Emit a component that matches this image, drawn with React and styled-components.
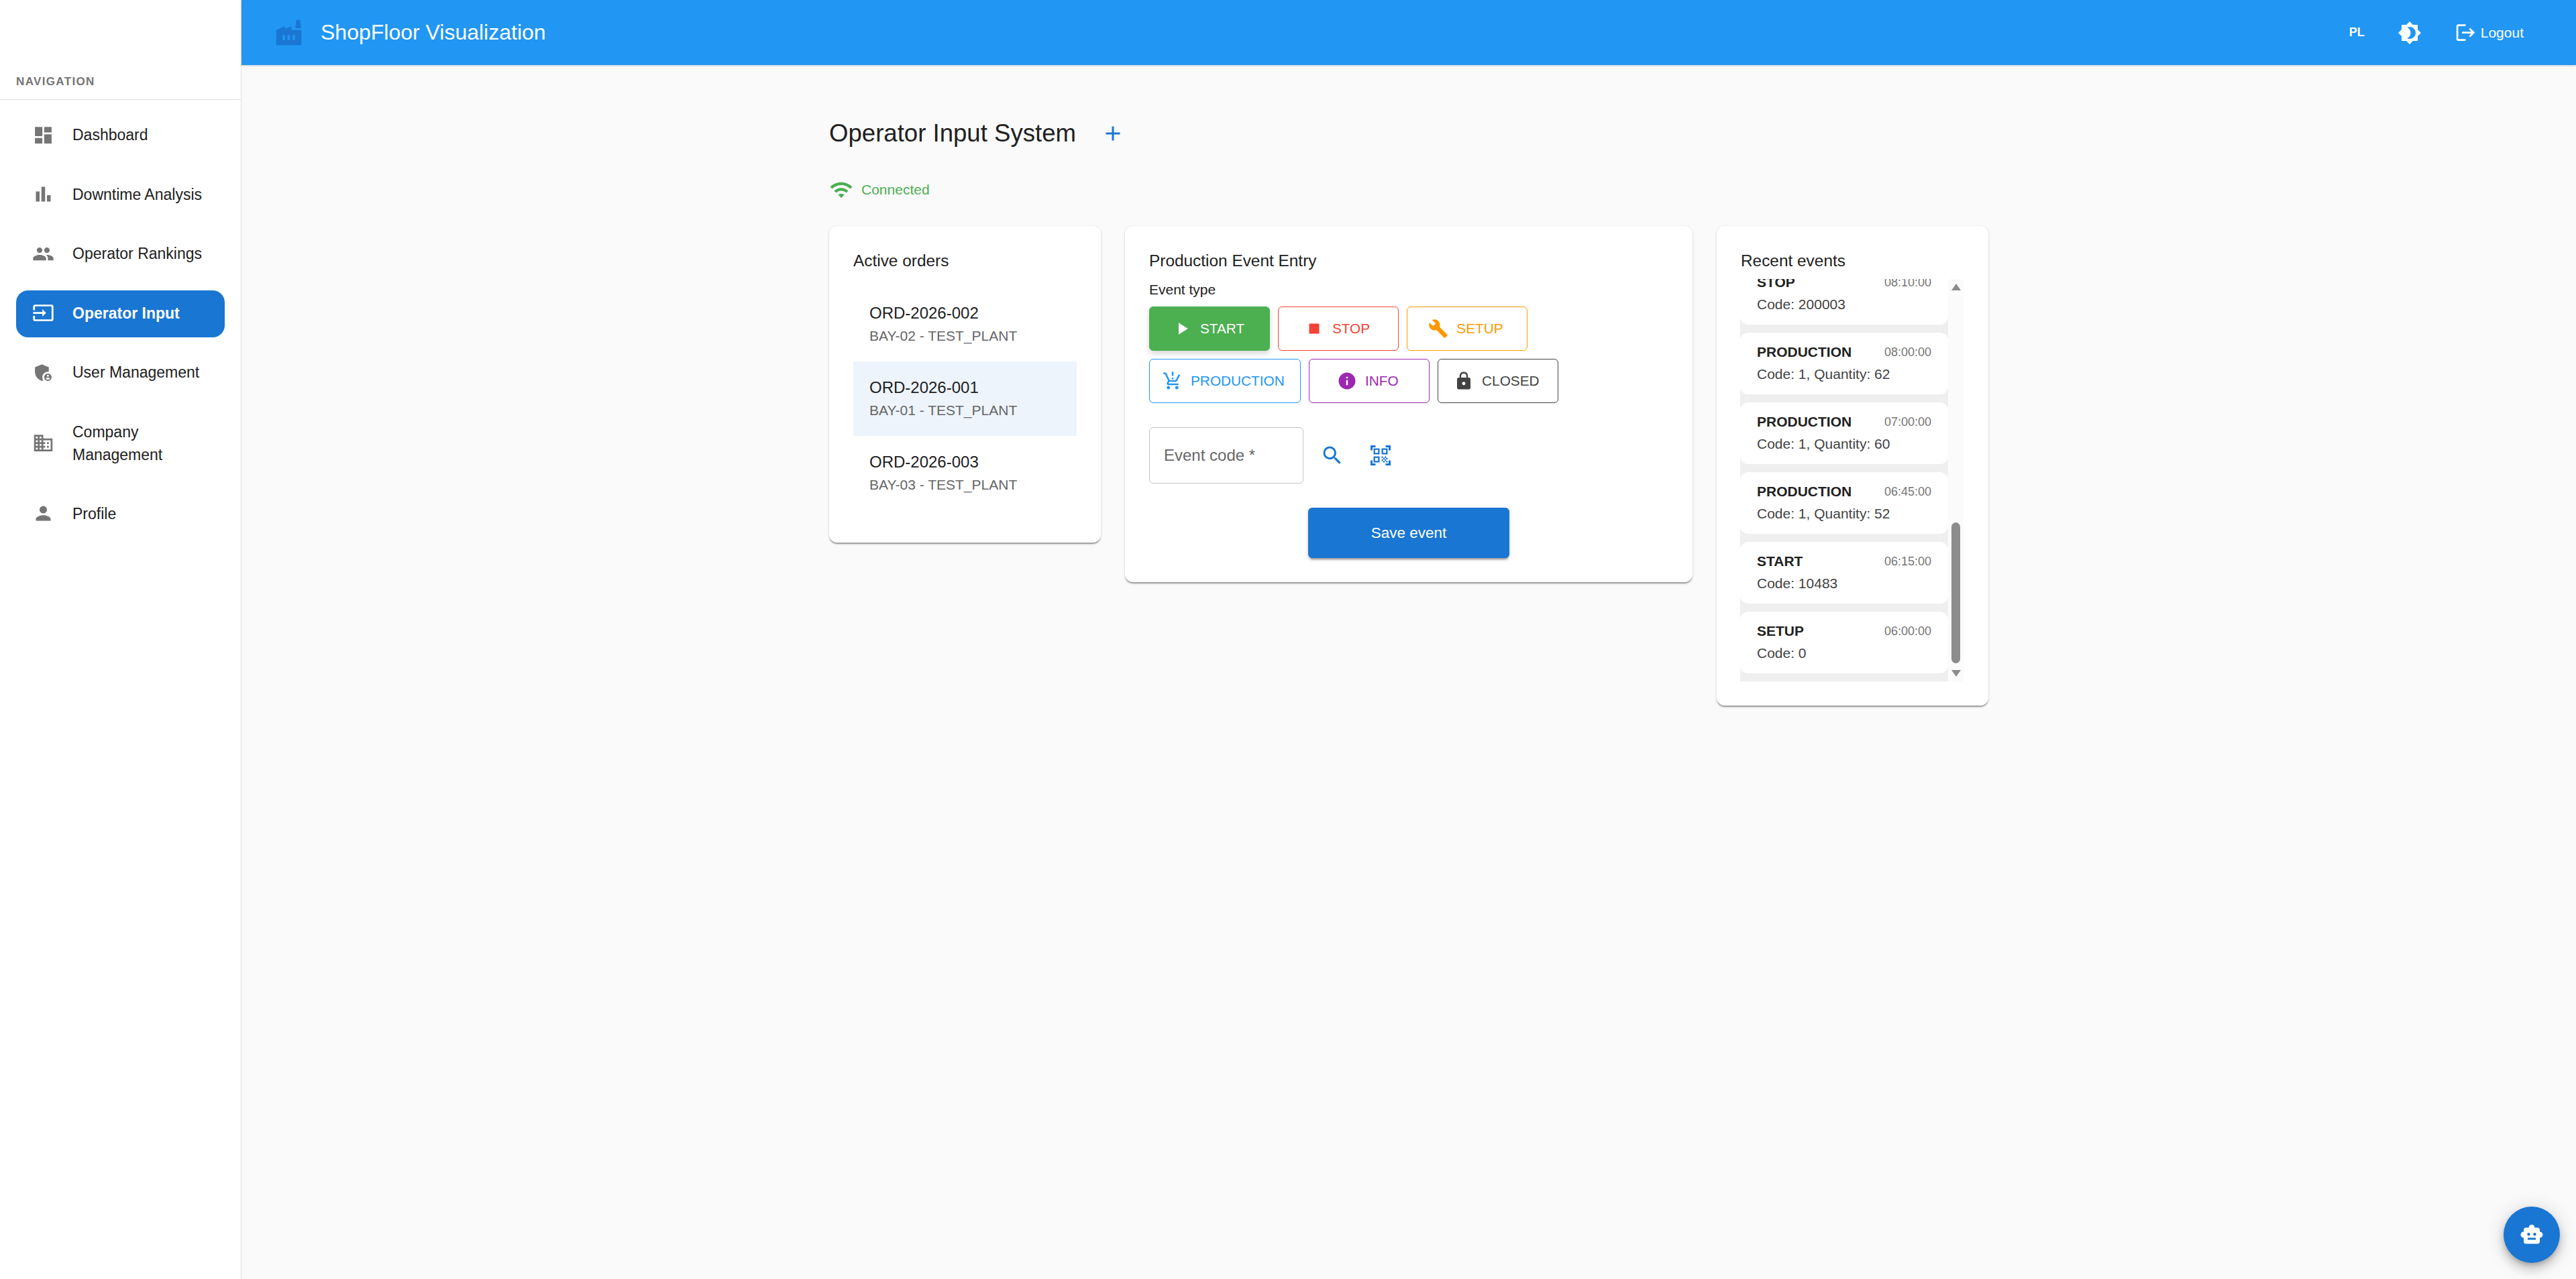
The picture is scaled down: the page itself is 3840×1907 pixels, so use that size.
import React from "react"
import styled, { createGlobalStyle } from "styled-components"
import {
  MdDashboard,
  MdBarChart,
  MdPeople,
  MdInput,
  MdAdminPanelSettings,
  MdBusiness,
  MdPerson,
  MdFactory,
  MdBrightness4,
  MdLogout,
  MdAdd,
  MdWifi,
  MdPlayArrow,
  MdStop,
  MdBuild,
  MdProductionQuantityLimits,
  MdInfo,
  MdLock,
  MdSearch,
  MdQrCodeScanner,
  MdSmartToy,
} from "react-icons/md"

const GlobalStyle = createGlobalStyle`
  html, body {
    margin: 0;
    padding: 0;
    background: #fafafa;
    font-family: "Liberation Sans", Arial, sans-serif;
    color: #212121;
  }
  * { box-sizing: border-box; }
`

const paperShadow = "0 3px 1.5px -1.5px rgba(0,0,0,.2), 0 1.5px 1.5px 0 rgba(0,0,0,.14), 0 1.5px 4.5px 0 rgba(0,0,0,.12)"

const Layout = styled.div`
  display: flex;
  height: 100vh;
  overflow: hidden;
`

const Sidebar = styled.aside`
  width: 360px;
  flex-shrink: 0;
  background: #fff;
  border-right: 1.5px solid #e0e0e0;
  display: flex;
  flex-direction: column;
`

const NavHeading = styled.div`
  height: 149px;
  padding: 112px 24px 0;
  font-size: 17px;
  line-height: 20px;
  font-weight: 700;
  letter-spacing: 1.35px;
  color: #757575;
  border-bottom: 1.5px solid #e0e0e0;
`

const NavList = styled.nav`
  display: flex;
  flex-direction: column;
  gap: 18px;
  padding: 18px 24px 0;
`

const NavItem = styled.div`
  display: flex;
  align-items: center;
  min-height: 70.5px;
  padding: 17px 12px 19px 24px;
  border-radius: 18px;
  background: ${props => (props.$active ? "#1976d2" : "transparent")};
  color: ${props => (props.$active ? "#fff" : "#212121")};
  font-size: 23px;
  line-height: 34px;
  font-weight: ${props => (props.$active ? 700 : 400)};

  svg {
    flex-shrink: 0;
    width: 33px;
    height: 33px;
    margin-right: 27px;
    color: ${props => (props.$active ? "#fff" : "#757575")};
  }
`

const Main = styled.div`
  flex: 1;
  min-width: 0;
  display: flex;
  flex-direction: column;
`

const AppBar = styled.header`
  height: 97px;
  flex-shrink: 0;
  display: flex;
  align-items: center;
  padding: 0 78px 0 48px;
  background: #2196f3;
  box-shadow: 0 1px 3px rgba(0,0,0,.2);
  color: #fff;
`

const Brand = styled.div`
  display: flex;
  align-items: center;
  gap: 25px;
  flex: 1;
  font-size: 32px;

  svg {
    width: 45px;
    height: 45px;
    color: #1976d2;
  }
`

const Lang = styled.span`
  font-size: 18px;
  font-weight: 700;
  margin-right: 49px;
`

const ThemeToggle = styled.span`
  display: flex;
  margin-right: 49px;

  svg {
    width: 36px;
    height: 36px;
  }
`

const Logout = styled.span`
  display: flex;
  align-items: center;
  gap: 6px;
  font-size: 21px;

  svg {
    width: 33px;
    height: 33px;
  }
`

const Content = styled.main`
  width: 1728px;
  margin: 0 auto;
  padding-top: 73px;
`

const TitleRow = styled.div`
  display: flex;
  align-items: center;
  height: 58px;
  gap: 37px;
`

const PageTitle = styled.h1`
  margin: 0;
  font-size: 36.6px;
  font-weight: 400;
  color: #212121;
`

const AddIcon = styled(MdAdd)`
  width: 36px;
  height: 36px;
  color: #1976d2;
`

const Status = styled.div`
  display: flex;
  align-items: center;
  gap: 12px;
  height: 36px;
  margin-top: 37px;
  font-size: 21px;
  color: #4caf50;

  svg {
    width: 36px;
    height: 36px;
  }
`

const Columns = styled.div`
  display: grid;
  grid-template-columns: 405px 846px 405px;
  gap: 36px;
  align-items: start;
  margin-top: 36px;
`

const Card = styled.section`
  background: #fff;
  border-radius: 12px;
  box-shadow: ${paperShadow};
  padding: 36px;
`

const CardTitle = styled.h2`
  margin: 0;
  font-size: 24.4px;
  line-height: 32px;
  font-weight: 400;
  color: #212121;
`

const OrderList = styled.div`
  margin-top: 23px;
  padding-bottom: 12px;
`

const OrderRow = styled.div`
  height: 111px;
  padding: 21px 24px 0;
  background: ${props => (props.$selected ? "#edf4fb" : "transparent")};
`

const OrderCode = styled.div`
  font-size: 24px;
  line-height: 36px;
  color: #212121;
`

const OrderMeta = styled.div`
  font-size: 21px;
  line-height: 31px;
  color: #666;
`

const FieldLabel = styled.div`
  margin-top: 12px;
  font-size: 21px;
  line-height: 30px;
  color: #212121;
`

const TypeGrid = styled.div`
  display: flex;
  flex-wrap: wrap;
  gap: 12px;
  width: 640px;
  margin-top: 10px;
`

const TypeButton = styled.div`
  display: inline-flex;
  align-items: center;
  justify-content: center;
  gap: 12px;
  height: 66px;
  min-width: 180px;
  padding: 0 23px 0 19px;
  border-radius: 6px;
  border: 1.5px solid ${props => props.$color};
  background: ${props => (props.$filled ? props.$color : "transparent")};
  color: ${props => (props.$filled ? "#fff" : props.$color)};
  box-shadow: ${props => (props.$filled ? "0 4px 8px rgba(0,0,0,.16)" : "none")};
  font-size: 20.8px;

  svg {
    width: 30px;
    height: 30px;
  }
`

const CodeRow = styled.div`
  display: flex;
  align-items: center;
  margin-top: 36px;
`

const CodeField = styled.div`
  display: flex;
  align-items: center;
  width: 230px;
  height: 84px;
  padding: 0 21px;
  border: 1.5px solid #c4c4c4;
  border-radius: 6px;
  font-size: 24px;
  color: #666;
`

const BlueIcon = styled.span`
  display: flex;
  color: #1976d2;
  margin-left: ${props => props.$gap}px;

  svg {
    width: 36px;
    height: 36px;
  }
`

const SaveRow = styled.div`
  display: flex;
  justify-content: center;
  margin-top: 36px;
`

const SaveButton = styled.div`
  display: flex;
  align-items: center;
  justify-content: center;
  width: 300px;
  height: 75px;
  border-radius: 6px;
  background: #1976d2;
  color: #fff;
  font-size: 22.5px;
  box-shadow: 0 4.5px 1.5px -3px rgba(0,0,0,.2), 0 3px 3px 0 rgba(0,0,0,.14), 0 1.5px 7.5px 0 rgba(0,0,0,.12);
`

const EventsBody = styled.div`
  display: flex;
  height: 600px;
  margin-top: 11px;
  margin-left: -1px;
`

const EventsViewport = styled.div`
  width: 310px;
  overflow: hidden;
`

const EventsStack = styled.div`
  display: flex;
  flex-direction: column;
  margin-top: -24px;
  background: #efefef;
`

const EventCard = styled.div`
  height: 92px;
  margin-bottom: 12px;
  padding: 12px 25px 0;
  background: #fff;
  border-radius: 12px;
`

const EventHead = styled.div`
  display: flex;
  align-items: center;
  justify-content: space-between;
  height: 34px;
`

const EventName = styled.span`
  font-size: 21px;
  font-weight: 700;
  color: #212121;
`

const EventTime = styled.span`
  font-size: 18px;
  color: #757575;
`

const EventDetail = styled.div`
  font-size: 21px;
  line-height: 32px;
  color: #424242;
`

const ScrollTrack = styled.div`
  position: relative;
  width: 23px;
  background: #fbfbfb;
`

const ScrollThumb = styled.div`
  position: absolute;
  left: 5px;
  top: 363px;
  width: 13px;
  height: 210px;
  border-radius: 7px;
  background: #8c8c8c;
`

const ScrollArrow = styled.div`
  position: absolute;
  left: 4.5px;
  width: 0;
  height: 0;
  border-left: 7px solid transparent;
  border-right: 7px solid transparent;
  ${props =>
    props.$up
      ? "top: 7px; border-bottom: 10px solid #8c8c8c;"
      : "bottom: 7px; border-top: 10px solid #8c8c8c;"}
`

const Fab = styled.div`
  position: fixed;
  right: 24px;
  bottom: 24px;
  width: 84px;
  height: 84px;
  border-radius: 50%;
  display: flex;
  align-items: center;
  justify-content: center;
  background: #1976d2;
  color: #fff;
  box-shadow: 0 4.5px 7.5px -1.5px rgba(0,0,0,.2), 0 9px 15px 1.5px rgba(0,0,0,.14), 0 3px 27px 3px rgba(0,0,0,.12);

  svg {
    width: 36px;
    height: 36px;
  }
`

const navItems = [
  { label: "Dashboard", icon: MdDashboard },
  { label: "Downtime Analysis", icon: MdBarChart },
  { label: "Operator Rankings", icon: MdPeople },
  { label: "Operator Input", icon: MdInput, active: true },
  { label: "User Management", icon: MdAdminPanelSettings },
  { label: "Company Management", icon: MdBusiness },
  { label: "Profile", icon: MdPerson },
]

const orders = [
  { code: "ORD-2026-002", meta: "BAY-02 - TEST_PLANT" },
  { code: "ORD-2026-001", meta: "BAY-01 - TEST_PLANT", selected: true },
  { code: "ORD-2026-003", meta: "BAY-03 - TEST_PLANT" },
]

const eventTypes = [
  { label: "START", icon: MdPlayArrow, color: "#4caf50", filled: true },
  { label: "STOP", icon: MdStop, color: "#f44336" },
  { label: "SETUP", icon: MdBuild, color: "#ff9800" },
  { label: "PRODUCTION", icon: MdProductionQuantityLimits, color: "#2196f3" },
  { label: "INFO", icon: MdInfo, color: "#9c27b0" },
  { label: "CLOSED", icon: MdLock, color: "#424242" },
]

const events = [
  { name: "STOP", time: "08:10:00", detail: "Code: 200003" },
  { name: "PRODUCTION", time: "08:00:00", detail: "Code: 1, Quantity: 62" },
  { name: "PRODUCTION", time: "07:00:00", detail: "Code: 1, Quantity: 60" },
  { name: "PRODUCTION", time: "06:45:00", detail: "Code: 1, Quantity: 52" },
  { name: "START", time: "06:15:00", detail: "Code: 10483" },
  { name: "SETUP", time: "06:00:00", detail: "Code: 0" },
]

export default function App() {
  return (
    <Layout>
      <GlobalStyle />
      <Sidebar>
        <NavHeading>NAVIGATION</NavHeading>
        <NavList>
          {navItems.map(item => (
            <NavItem key={item.label} $active={item.active}>
              <item.icon />
              <span>{item.label}</span>
            </NavItem>
          ))}
        </NavList>
      </Sidebar>
      <Main>
        <AppBar>
          <Brand>
            <MdFactory />
            <span>ShopFloor Visualization</span>
          </Brand>
          <Lang>PL</Lang>
          <ThemeToggle>
            <MdBrightness4 />
          </ThemeToggle>
          <Logout>
            <MdLogout />
            <span>Logout</span>
          </Logout>
        </AppBar>
        <Content>
          <TitleRow>
            <PageTitle>Operator Input System</PageTitle>
            <AddIcon />
          </TitleRow>
          <Status>
            <MdWifi />
            <span>Connected</span>
          </Status>
          <Columns>
            <Card>
              <CardTitle>Active orders</CardTitle>
              <OrderList>
                {orders.map(order => (
                  <OrderRow key={order.code} $selected={order.selected}>
                    <OrderCode>{order.code}</OrderCode>
                    <OrderMeta>{order.meta}</OrderMeta>
                  </OrderRow>
                ))}
              </OrderList>
            </Card>
            <Card>
              <CardTitle>Production Event Entry</CardTitle>
              <FieldLabel>Event type</FieldLabel>
              <TypeGrid>
                {eventTypes.map(type => (
                  <TypeButton key={type.label} $color={type.color} $filled={type.filled}>
                    <type.icon />
                    <span>{type.label}</span>
                  </TypeButton>
                ))}
              </TypeGrid>
              <CodeRow>
                <CodeField>Event code *</CodeField>
                <BlueIcon $gap={25}>
                  <MdSearch />
                </BlueIcon>
                <BlueIcon $gap={36}>
                  <MdQrCodeScanner />
                </BlueIcon>
              </CodeRow>
              <SaveRow>
                <SaveButton>Save event</SaveButton>
              </SaveRow>
            </Card>
            <Card>
              <CardTitle>Recent events</CardTitle>
              <EventsBody>
                <EventsViewport>
                  <EventsStack>
                    {events.map(event => (
                      <EventCard key={event.time}>
                        <EventHead>
                          <EventName>{event.name}</EventName>
                          <EventTime>{event.time}</EventTime>
                        </EventHead>
                        <EventDetail>{event.detail}</EventDetail>
                      </EventCard>
                    ))}
                  </EventsStack>
                </EventsViewport>
                <ScrollTrack>
                  <ScrollArrow $up />
                  <ScrollThumb />
                  <ScrollArrow />
                </ScrollTrack>
              </EventsBody>
            </Card>
          </Columns>
        </Content>
      </Main>
      <Fab>
        <MdSmartToy />
      </Fab>
    </Layout>
  )
}
